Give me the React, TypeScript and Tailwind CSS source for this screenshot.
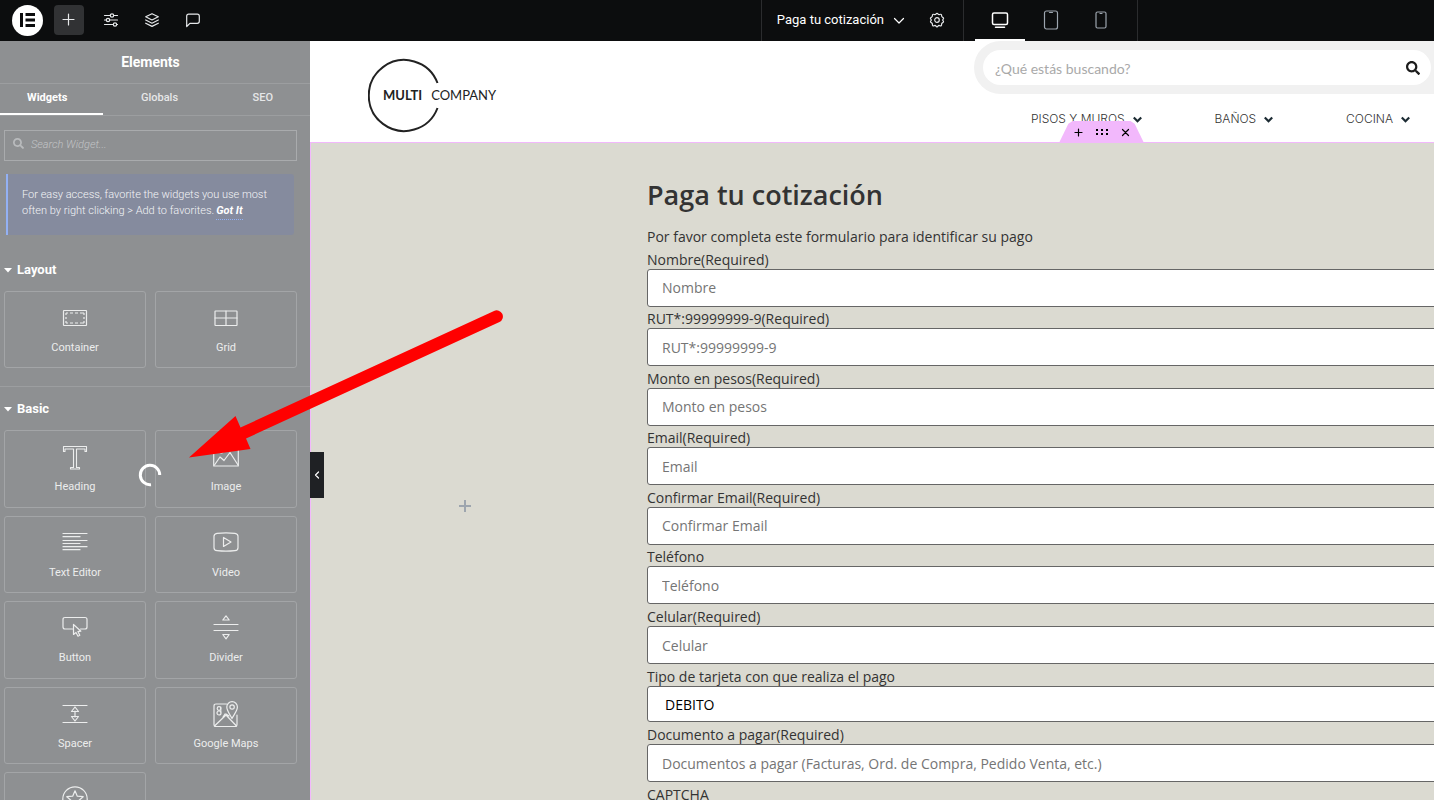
import React from "react";
import { FaSearch } from "react-icons/fa";

type IconProps = { children: React.ReactNode; className?: string; box?: string };

function Glyph({ children, className = "size-[26px]", box = "0 0 26 26" }: IconProps) {
  return (
    <svg
      viewBox={box}
      className={className}
      fill="none"
      stroke="currentColor"
      strokeWidth="1.2"
      strokeLinecap="round"
      strokeLinejoin="round"
      aria-hidden="true"
    >
      {children}
    </svg>
  );
}

const layoutWidgets = [
  {
    name: "Container",
    icon: (
      <Glyph>
        <rect x="1.5" y="5.5" width="23" height="15" rx="0.5" />
        <path d="M4 8h2M8 8h3M13 8h3M18 8h4M4 18h2M8 18h3M13 18h3M18 18h4M4 8v2M4 12v2M4 16v2M22 8v2M22 12v2M22 16v2" strokeLinecap="butt" />
      </Glyph>
    ),
  },
  {
    name: "Grid",
    icon: (
      <Glyph>
        <rect x="2" y="6" width="22" height="14.5" rx="0.5" />
        <path d="M13 6v14.5M2 13h22" />
      </Glyph>
    ),
  },
];

const basicWidgets = [
  {
    name: "Heading",
    icon: (
      <Glyph>
        <path d="M1.500 2.500h23v5h-1.500V5h-8.500v18.500h3V25h-9v-1.500h3V5H3v2.500H1.500z" strokeWidth="1.1" />
      </Glyph>
    ),
  },
  {
    name: "Image",
    icon: (
      <Glyph>
        <rect x="0.7" y="2.5" width="24.6" height="19.5" />
        <path d="M1.5 21l5.5-8 4 3.5 6-8 8 12.5" />
        <circle cx="8" cy="7" r="2" />
      </Glyph>
    ),
  },
  {
    name: "Text Editor",
    icon: (
      <Glyph>
        <path d="M1 3.500h24M1 6.700h17M1 10.500h24M1 13.500h17M1 16.700h24M1 19.700h17" />
      </Glyph>
    ),
  },
  {
    name: "Video",
    icon: (
      <Glyph>
        <path d="M4 3.300q9-1 18 0 3 .4 3 3v11.400q0 2.600-3 3-9 1-18 0-3-.4-3-3V6.300q0-2.600 3-3z" />
        <path d="M10.500 7.500v9l7.500-4.500z" />
      </Glyph>
    ),
  },
  {
    name: "Button",
    icon: (
      <Glyph>
        <path d="M10.500 14H3q-2 0-2-2V4.500q0-2 2-2h20q2 0 2 2V12q0 2-2 2h-4.500" />
        <path d="M11.500 9.500v10l2.500-2 2 3.700 1.800-.9-1.900-3.700 3-.4z" />
      </Glyph>
    ),
  },
  {
    name: "Divider",
    icon: (
      <Glyph>
        <path d="M1 9.500h24M1 15.500h24M9.800 5h6.400L13 0.900zM9.800 19.500h6.400L13 23.800z" />
      </Glyph>
    ),
  },
  {
    name: "Spacer",
    icon: (
      <Glyph>
        <path d="M1 4.500h24M1 21.500h24M13 10v6M9.500 10.500h7L13 6zM9.500 15.500h7L13 20z" />
      </Glyph>
    ),
  },
  {
    name: "Google Maps",
    icon: (
      <Glyph>
        <path d="M13.500 3H3Q1 3 1 5v18.500q0 2 2 2h19q2 0 2-2V14" />
        <path d="M19 17.500C16 12 13.800 9.500 13.800 6a5.300 5.300 0 0 1 10.600 0c0 3.500-2.400 6-5.400 11.500z" />
        <circle cx="19.100" cy="6" r="2.200" />
        <path d="M1.500 25L13 14l10.500 11M12 13l-2 3M16 15l-3-2" />
        <circle cx="6" cy="7.500" r="1.800" />
        <circle cx="6" cy="12" r="2" />
        <path d="M7.800 6v5" />
      </Glyph>
    ),
  },
  {
    name: "Icon",
    icon: (
      <Glyph>
        <circle cx="13" cy="13" r="12.200" />
        <path d="M13 4.800l2.300 5.400 5.900.5-4.500 3.900 1.400 5.700-5.100-3-5.100 3 1.400-5.700-4.500-3.900 5.900-.5z" />
      </Glyph>
    ),
  },
];

function WidgetCard({ name, icon }: { name: string; icon: React.ReactNode }) {
  return (
    <button
      type="button"
      className="flex min-h-[77px] flex-col items-center gap-[9px] rounded-[3px] border border-[#a3a5a7] pt-[13px] text-[11px] leading-4 text-[#eceded]"
    >
      {icon}
      <span>{name}</span>
    </button>
  );
}

function SectionTitle({ children }: { children: React.ReactNode }) {
  return (
    <h3 className="text-[13px] leading-5 font-bold text-white">
      <button type="button" className="flex items-center gap-1">
        <svg viewBox="0 0 9 5" className="h-[5px] w-[9px] fill-current" aria-hidden="true">
          <path d="M0 0h8L4 4.500z" />
        </svg>
        {children}
      </button>
    </h3>
  );
}

function TopBar() {
  return (
    <header className="flex h-[41px] shrink-0 bg-[#0c0d0e] text-[#e6e8ea]">
      <div className="flex flex-1 items-center pb-px pl-3">
        <button type="button" aria-label="Elementor" className="flex size-[31px] items-center justify-center rounded-full bg-white text-[#0c0d0e]">
          <svg viewBox="0 0 15 14" className="h-[14px] w-[15px] fill-current" aria-hidden="true">
            <path d="M0 0h3v14H0zM5.500 0H15v3H5.500zM5.500 5.500H15v3H5.500zM5.500 11H15v3H5.500z" />
          </svg>
        </button>
        <button type="button" aria-label="Add element" className="ml-[11px] flex size-[30px] items-center justify-center rounded bg-[#313234]">
          <Glyph className="size-4" box="0 0 16 16">
            <path d="M7.500 2v11M2 7.500h11" />
          </Glyph>
        </button>
        <div className="ml-[19px] flex items-center gap-[25px]">
          <button type="button" aria-label="Site settings">
            <Glyph className="size-4" box="0 0 16 16">
              <path d="M1.500 3.500H7M11 3.500h3.500M1.500 8h1.500M7 8h7.500M1.500 12.500H10M14 12.500h.500" />
              <circle cx="9" cy="3.500" r="1.700" />
              <circle cx="5" cy="8" r="1.700" />
              <circle cx="12" cy="12.500" r="1.700" />
            </Glyph>
          </button>
          <button type="button" aria-label="Structure">
            <Glyph className="size-4" box="0 0 16 16">
              <path d="M8 1.700l6.300 3.100L8 8 1.700 4.800zM1.700 8L8 11.200 14.300 8M1.700 11.200L8 14.400l6.300-3.200" />
            </Glyph>
          </button>
          <button type="button" aria-label="Notes">
            <Glyph className="size-4" box="0 0 16 16">
              <path d="M1.700 14.500V4.200q0-2 2-2h8.600q2 0 2 2v5.100q0 2-2 2H4.900z" />
            </Glyph>
          </button>
        </div>
      </div>

      <div className="flex items-center border-l border-[#2b2c2e] pr-[18px] pb-px pl-[15px]">
        <button type="button" className="flex items-center gap-[9px] text-[13px] text-white">
          Paga tu cotización
          <Glyph className="size-3" box="0 0 12 12">
            <path d="M1.500 4.500l4.500 4.500L10.500 4.500" />
          </Glyph>
        </button>
        <button type="button" aria-label="Page settings" className="ml-6">
          <Glyph className="size-4" box="0 0 16 16">
            <path d="M6.800 2.200Q8 .4 9.200 2.200q.5.700 1.400.3 2.200-.8 2 1.300 0 .9.800 1.300 2 .9.600 2.300-.7.600 0 1.300 1.300 1.400-.6 2.200-.8.400-.8 1.300.2 2.200-2 1.400-.9-.4-1.400.3-1.200 1.800-2.400 0-.5-.7-1.400-.3-2.200.8-2-1.400 0-.9-.8-1.300-1.900-.8-.6-2.200.7-.7 0-1.300-1.400-1.400.6-2.300.8-.4.800-1.300-.2-2.100 2-1.300.9.400 1.400-.3z" />
            <circle cx="8" cy="8" r="2.300" />
          </Glyph>
        </button>
      </div>

      <div className="flex border-x border-[#2b2c2e] px-[11px] text-[#9da5ae]">
        <button type="button" aria-label="Desktop" className="flex w-[50px] items-center justify-center border-b-2 border-white text-white">
          <Glyph className="size-[18px]" box="0 0 18 18">
            <rect x="1.500" y="2" width="15" height="11.500" rx="1.500" strokeWidth="1.500" />
            <path d="M4.500 16.200h9" strokeWidth="1.500" />
          </Glyph>
        </button>
        <button type="button" aria-label="Tablet" className="flex w-[51px] items-center justify-center pb-0.5">
          <Glyph className="size-5" box="0 0 20 20">
            <rect x="3.500" y="1" width="13" height="18" rx="2" />
            <path d="M8.500 2.500h3" />
          </Glyph>
        </button>
        <button type="button" aria-label="Mobile" className="flex w-[50px] items-center justify-center pb-0.5">
          <Glyph className="size-[18px]" box="0 0 18 18">
            <rect x="4" y="1" width="10" height="16" rx="1.500" />
            <path d="M8 2.500h2" />
          </Glyph>
        </button>
      </div>
      <div className="w-[296px] shrink-0" />
    </header>
  );
}

function Sidebar() {
  return (
    <aside className="relative w-[310px] shrink-0 bg-[#8e9092] text-[#e6e7e8]">
      <div className="h-full overflow-hidden">
        <h2 className="flex h-[43px] items-center justify-center border-b border-[#9c9ea0] pr-[9px] text-sm font-bold text-white">Elements</h2>
        <nav className="grid h-8 grid-cols-3 border-b border-[#9c9ea0] text-[11px] font-medium">
          <button type="button" className="border-b-2 border-white pr-[9px] font-bold text-white">Widgets</button>
          <button type="button" className="pb-0.5 pl-[9px]">Globals</button>
          <button type="button" className="pb-0.5 pl-[9px]">SEO</button>
        </nav>

        <div className="pr-[13px] pl-1">
          <label className="mt-[14px] flex h-[31px] items-center gap-[7px] border border-[#a9abad] px-2 text-[#b9bbbd]">
            <FaSearch className="mb-1 size-[11px]" aria-hidden="true" />
            <input
              type="search"
              aria-label="Search Widget"
              placeholder="Search Widget..."
              className="min-w-0 flex-1 bg-transparent text-[11px] font-light italic outline-none placeholder:text-[#c2c4c6]"
            />
          </label>

          <div className="mt-[13px] mr-[3px] ml-0.5 rounded-r-[3px] border-l-2 border-[#93b1f4] bg-[#858b9e] px-[14px] pt-[13px] pb-4 text-[11px] leading-4 font-light text-[#f4f5f7]">
            For easy access, favorite the widgets you use most often by right clicking &gt; Add to favorites.
            <a href="#got-it" className="ml-0.5 border-b border-dotted border-[#93b1f4] pb-0.5 font-bold text-white italic">Got It</a>
          </div>

          <div className="pt-[25px]">
            <SectionTitle>Layout</SectionTitle>
            <div className="mt-[11px] grid grid-cols-2 gap-[9px]">
              {layoutWidgets.map((w) => (
                <WidgetCard key={w.name} {...w} />
              ))}
            </div>
          </div>
        </div>

        <div className="mt-[18px] border-t border-[#9c9ea0] pt-3 pr-[13px] pl-1">
          <SectionTitle>Basic</SectionTitle>
          <div className="mt-[11px] grid min-h-[420px] auto-rows-fr grid-cols-2 gap-x-[9px] gap-y-2">
            {basicWidgets.map((w) => (
              <WidgetCard key={w.name} {...w} />
            ))}
          </div>
        </div>
      </div>

      <svg viewBox="0 0 24 24" className="absolute top-[422px] left-[138px] size-6" fill="none" stroke="white" strokeWidth="3" role="img" aria-label="Loading">
        <path d="M21.700 12A9.700 9.700 0 1 0 13 21.650" />
      </svg>
      <button type="button" aria-label="Hide panel" className="absolute top-[411px] left-full z-10 flex h-[46px] w-[14px] items-center justify-center bg-[#1f2124] text-white">
        <Glyph className="size-2" box="0 0 8 8">
          <path d="M5.500 1L2.500 4l3 3" />
        </Glyph>
      </button>
    </aside>
  );
}

function SiteHeader() {
  return (
    <header className="relative flex h-[101px] shrink-0 justify-between bg-white">
      <a href="#home" aria-label="Multi Company" className="relative mt-[17px] ml-[58px] h-[75px] w-[130px] text-[#222]">
        <svg viewBox="0 0 75 75" className="size-[75px]" fill="none" stroke="currentColor" strokeWidth="2" aria-hidden="true">
          <path d="M69.500 25A35.500 35.500 0 1 0 69.500 50" />
        </svg>
        <span className="absolute inset-y-0 left-[15px] flex items-center gap-[9px] font-[Lato] text-[13px] whitespace-nowrap">
          <span className="font-bold">MULTI</span>
          <span>COMPANY</span>
        </span>
      </a>
      <div className="w-[460px]">
        <div className="rounded-l-full bg-[#f1f1f1] py-[9px] pr-[3px] pl-[9px]">
          <label className="flex h-[35px] items-center rounded-full bg-white pr-[11px] pl-3">
            <input
              type="search"
              aria-label="Buscar"
              placeholder="¿Qué estás buscando?"
              className="min-w-0 flex-1 pt-0.5 font-[Lato] text-sm text-[#333] outline-none placeholder:text-[#a9a9a9]"
            />
            <FaSearch className="size-[14px] text-[#1c1c1c]" aria-hidden="true" />
          </label>
        </div>
        <nav className="flex justify-between pt-[17px] pr-6 pl-[57px] font-[Inter] text-xs leading-4 font-light text-[#333]">
          {["PISOS Y MUROS", "BAÑOS", "COCINA"].map((item) => (
            <a key={item} href="#menu" className="flex items-center gap-2">
              {item}
              <svg viewBox="0 0 9 9" className="size-[9px] text-[#1c2b33]" fill="none" stroke="currentColor" strokeWidth="2.200" aria-hidden="true">
                <path d="M0.800 2.500l3.700 3.700L8.200 2.500" />
              </svg>
            </a>
          ))}
        </nav>
      </div>
      <div className="absolute right-[290px] -bottom-px z-10 flex h-[22px] w-[85px] items-center justify-center gap-[13px] bg-[#f2b8fc] text-black [clip-path:polygon(0_100%,11%_12%,16%_0,84%_0,89%_12%,100%_100%)]">
        <button type="button" aria-label="Add section">
          <Glyph className="size-[9px]" box="0 0 9 9">
            <path d="M4.500 1v7M1 4.500h7" />
          </Glyph>
        </button>
        <button type="button" aria-label="Edit section">
          <svg viewBox="0 0 12 6" className="h-[6px] w-3 fill-current" aria-hidden="true">
            <path d="M0 0h2v2H0zM5 0h2v2H5zM10 0h2v2h-2zM0 4h2v2H0zM5 4h2v2H5zM10 4h2v2h-2z" />
          </svg>
        </button>
        <button type="button" aria-label="Delete section">
          <Glyph className="size-[9px]" box="0 0 9 9">
            <path d="M1.500 1.500l6 6M7.500 1.500l-6 6" />
          </Glyph>
        </button>
      </div>
    </header>
  );
}

const fields = [
  { id: "nombre", label: "Nombre(Required)", placeholder: "Nombre" },
  { id: "rut", label: "RUT*:99999999-9(Required)", placeholder: "RUT*:99999999-9" },
  { id: "monto", label: "Monto en pesos(Required)", placeholder: "Monto en pesos" },
  { id: "email", label: "Email(Required)", placeholder: "Email" },
  { id: "email2", label: "Confirmar Email(Required)", placeholder: "Confirmar Email" },
  { id: "telefono", label: "Teléfono", placeholder: "Teléfono" },
  { id: "celular", label: "Celular(Required)", placeholder: "Celular" },
];

function Field({ id, label, placeholder }: { id: string; label: string; placeholder: string }) {
  return (
    <div className="flex flex-col justify-end">
      <label htmlFor={id} className="leading-[18px]">{label}</label>
      <input
        id={id}
        type="text"
        placeholder={placeholder}
        className="h-[38px] w-full rounded-[3px] border border-[#666] bg-white px-[14px] outline-none placeholder:text-[#757575]"
      />
    </div>
  );
}

function PaymentForm() {
  return (
    <form className="-mr-1 flex-1 pt-[34px] font-['Open_Sans'] text-[14px] text-[#333]">
      <h1 className="text-[27px] leading-9 font-semibold">Paga tu cotización</h1>
      <p className="mt-[14px] leading-5">Por favor completa este formulario para identificar su pago</p>
      <div className="grid min-h-[417px] auto-rows-fr">
        {fields.map((f) => (
          <Field key={f.id} {...f} />
        ))}
      </div>
      <div className="mt-1 flex flex-col">
        <label htmlFor="tarjeta" className="leading-[18px]">Tipo de tarjeta con que realiza el pago</label>
        <select id="tarjeta" className="h-9 w-full appearance-none rounded-[3px] border border-[#666] bg-white px-[17px] text-black outline-none">
          <option>DEBITO</option>
          <option>CREDITO</option>
        </select>
      </div>
      <div className="mt-1">
        <Field id="documento" label="Documento a pagar(Required)" placeholder="Documentos a pagar (Facturas, Ord. de Compra, Pedido Venta, etc.)" />
      </div>
      <p className="mt-1 leading-[18px]">CAPTCHA</p>
    </form>
  );
}

export default function App() {
  return (
    <div className="relative flex h-screen flex-col overflow-hidden font-[Roboto,sans-serif]">
      <TopBar />
      <div className="flex min-h-0 flex-1">
        <Sidebar />
        <main className="flex min-w-0 flex-1 flex-col overflow-hidden">
          <SiteHeader />
          <section className="flex flex-1 border-t border-l border-[#f2b8fc] bg-[#dbdad1]">
            <div className="flex w-[336px] shrink-0 justify-center pt-[356px] pr-7">
              <button type="button" aria-label="Add widget" className="h-[14px] text-[#9da5ae]">
                <Glyph className="size-[14px]" box="0 0 14 14">
                  <path d="M7 1v12M1 7h12" strokeWidth="2" strokeLinecap="butt" />
                </Glyph>
              </button>
            </div>
            <PaymentForm />
          </section>
        </main>
      </div>
      <svg viewBox="0 0 320 156" className="pointer-events-none absolute top-[306px] left-[186px] z-20 h-[156px] w-[320px]" aria-hidden="true">
        <path d="M3 151.500L49.500 110 54.500 121.500 308 5a6 6 0 0 1 5.500 11L60 132.500 64.500 143z" fill="#f00" />
      </svg>
    </div>
  );
}
